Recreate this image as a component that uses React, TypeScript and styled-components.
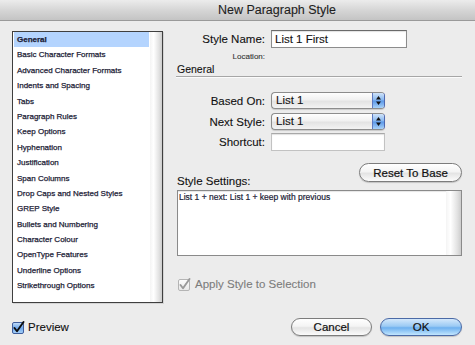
import styled, { createGlobalStyle } from 'styled-components';

const GlobalStyle = createGlobalStyle`
    html, body {
        margin: 0;
        padding: 0;
        background: #ececec;
    }
    * {
        box-sizing: border-box;
    }
`;

const categories = [
    'General',
    'Basic Character Formats',
    'Advanced Character Formats',
    'Indents and Spacing',
    'Tabs',
    'Paragraph Rules',
    'Keep Options',
    'Hyphenation',
    'Justification',
    'Span Columns',
    'Drop Caps and Nested Styles',
    'GREP Style',
    'Bullets and Numbering',
    'Character Colour',
    'OpenType Features',
    'Underline Options',
    'Strikethrough Options',
];

const Window = styled.div`
    width: 475px;
    height: 345px;
    overflow: hidden;
    background: #ececec;
    display: flex;
    flex-direction: column;
    font-family: "Liberation Sans", Arial, sans-serif;
    color: #111;
    -webkit-text-stroke: 0.1px currentColor;
`;

const TitleBar = styled.div`
    height: 21px;
    flex: none;
    border-bottom: 1px solid #9a9a9a;
    background: linear-gradient(#ececec, #d6d6d6 50%, #c4c4c4);
    font-size: 12.5px;
    line-height: 20px;
    text-align: center;
    padding-left: 79px;
    color: #1e1e1e;
`;

const Main = styled.div`
    display: grid;
    grid-template-columns: 151px 285px;
    column-gap: 14px;
    padding: 9px 0 0 12px;
`;

const CategoryList = styled.div`
    margin-top: 1px;
    height: 272px;
    border: 1px solid #3f3f3f;
    background: #fff;
    display: grid;
    grid-template-columns: 1fr 12px;
    box-shadow: 1px 1px 0 #d4d4d4;
`;

const Items = styled.ul`
    list-style: none;
    margin: 0;
    padding: 0 1px;
`;

const Item = styled.li<{ $selected?: boolean }>`
    height: 15.4px;
    line-height: 15.4px;
    padding-left: 3px;
    font-size: 8px;
    white-space: nowrap;
    color: #1c1c36;
    -webkit-text-stroke: 0.25px #1c1c36;
    font-weight: ${p => (p.$selected ? 700 : 400)};
    background: ${p => (p.$selected ? '#b4d4fe' : 'transparent')};
`;

const ScrollStrip = styled.div`
    background: linear-gradient(to right, #f4f4f4, #ffffff 30%, #e2e2e2 75%, #cdcdcd);
`;

const Pane = styled.div`
    display: flex;
    flex-direction: column;
`;

const Row = styled.div<{ $mt?: number }>`
    display: flex;
    align-items: center;
    margin-top: ${p => p.$mt ?? 0}px;
`;

const Label = styled.span<{ $small?: boolean }>`
    width: 88px;
    margin-right: 6px;
    text-align: right;
    font-size: ${p => (p.$small ? '8px' : '11.5px')};
    line-height: ${p => (p.$small ? '10px' : '14px')};
    color: ${p => (p.$small ? '#333' : '#111')};
    white-space: nowrap;
`;

const TextField = styled.div<{ $w: number; $h: number; $light?: boolean }>`
    width: ${p => p.$w}px;
    height: ${p => p.$h}px;
    border: 1px solid ${p => (p.$light ? '#c2c2c2' : '#8c8c8c')};
    border-top-color: ${p => (p.$light ? '#a8a8a8' : '#6a6a6a')};
    background: #fff;
    box-shadow: inset 0 1px 1px rgba(0, 0, 0, 0.12);
    font-size: 11.5px;
    line-height: 16px;
    padding-left: 3px;
    white-space: nowrap;
`;

const SectionHeading = styled.div`
    margin: 1px 0 0 -1px;
    padding-left: 1px;
    font-size: 10.5px;
    line-height: 12px;
    padding-bottom: 1px;
    border-bottom: 1px solid #a6a6a6;
    box-shadow: 0 1px 0 #fbfbfb;
`;

const Select = styled.div`
    width: 114px;
    height: 17px;
    border: 1px solid #8c8c8c;
    border-right-color: #4f68b0;
    border-radius: 4px;
    overflow: hidden;
    display: flex;
    background: linear-gradient(#fefefe, #f1f1f1 45%, #e3e3e3 55%, #f3f3f3);
    box-shadow: 0 1px 1px rgba(0, 0, 0, 0.15);
`;

const SelectValue = styled.span`
    flex: 1;
    font-size: 11.5px;
    line-height: 15px;
    padding-left: 4px;
`;

const Stepper = styled.span`
    width: 12px;
    border-left: 1px solid #5d79c0;
    background: linear-gradient(#cfe3fa, #85b6ef 48%, #5a97e8 52%, #a8d2f8);
    display: flex;
    align-items: center;
    justify-content: center;
`;

const SettingsHeader = styled.div`
    margin-top: 12px;
    display: flex;
    justify-content: space-between;
    align-items: flex-end;
`;

const SettingsLabel = styled.span`
    font-size: 11.5px;
    line-height: 13px;
`;

const PushButton = styled.button<{ $w: number; $h?: number; $default?: boolean }>`
    width: ${p => p.$w}px;
    height: ${p => p.$h ?? 18}px;
    padding: 0;
    border-radius: 10px;
    border: 1px solid ${p => (p.$default ? '#4b6aa6' : '#7c7c7c')};
    background: ${p =>
        p.$default
            ? 'linear-gradient(#d4e8fb, #9bcaf4 45%, #6eb0ef 55%, #c2e6fe)'
            : 'linear-gradient(#ffffff, #f4f4f4 45%, #e4e4e4 55%, #fbfbfb)'};
    box-shadow: 0 1px 1px rgba(0, 0, 0, 0.18);
    font-family: "Liberation Sans", Arial, sans-serif;
    font-size: 11.5px;
    color: #111;
    -webkit-text-stroke: 0.2px #111;
`;

const ResetButton = styled(PushButton)`
    margin-bottom: 6px;
`;

const SettingsBox = styled.div`
    margin-top: 2px;
    height: 66px;
    border: 1px solid #8a8a8a;
    background: #fff;
    display: grid;
    grid-template-columns: 1fr 15px;
    box-shadow: inset 0 1px 1px rgba(0, 0, 0, 0.1);
`;

const SettingsText = styled.div`
    font-size: 8.5px;
    line-height: 11px;
    padding: 1px 1px;
    color: #1c1c36;
    -webkit-text-stroke: 0.2px #1c1c36;
`;

const CheckRow = styled.div<{ $mt?: number; $disabled?: boolean }>`
    display: flex;
    align-items: center;
    gap: ${p => (p.$disabled ? 4 : 3)}px;
    margin-top: ${p => p.$mt ?? 0}px;
    margin-left: ${p => (p.$disabled ? 1 : 0)}px;
    font-size: 11.5px;
    line-height: 14px;
    color: ${p => (p.$disabled ? '#7c7c7c' : '#111')};
`;

const Footer = styled.div`
    margin-top: 15px;
    height: 18px;
    padding: 0 13px 0 12px;
    display: flex;
    align-items: center;
    justify-content: space-between;
`;

const ButtonGroup = styled.div`
    display: flex;
    gap: 8px;
`;

function StepperArrows() {
    return (
        <svg width="7" height="11" viewBox="0 0 7 11">
            <path d="M3.5 1 L6 4.5 L1 4.5 Z" fill="#111" />
            <path d="M3.5 10 L6 6.5 L1 6.5 Z" fill="#111" />
        </svg>
    );
}

function CheckBox({ disabled }: { disabled?: boolean }) {
    const id = disabled ? 'cbg' : 'cbb';
    return (
        <svg width="13" height="13" viewBox="0 0 13 13">
            <defs>
                <linearGradient id={id} x1="0" y1="0" x2="0" y2="1">
                    {disabled ? (
                        <>
                            <stop offset="0" stopColor="#fdfdfd" />
                            <stop offset="1" stopColor="#e8e8e8" />
                        </>
                    ) : (
                        <>
                            <stop offset="0" stopColor="#c7e0fa" />
                            <stop offset="0.5" stopColor="#6ea7ec" />
                            <stop offset="1" stopColor="#a9d3f9" />
                        </>
                    )}
                </linearGradient>
            </defs>
            <rect x="0.5" y="1.5" width="11" height="11" rx="1.5" fill={`url(#${id})`} stroke={disabled ? '#b4b4b4' : '#3f5d9c'} />
            <path
                d="M2.5 7 L5 10.3 L11.5 1"
                fill="none"
                stroke={disabled ? '#9a9a9a' : '#0d0d0d'}
                strokeWidth="1.9"
                strokeLinecap="round"
                strokeLinejoin="round"
            />
        </svg>
    );
}

export default function App() {
    return (
        <Window>
            <GlobalStyle />
            <TitleBar>New Paragraph Style</TitleBar>
            <Main>
                <CategoryList>
                    <Items>
                        {categories.map((name, index) => (
                            <Item key={name} $selected={index === 0}>
                                {name}
                            </Item>
                        ))}
                    </Items>
                    <ScrollStrip />
                </CategoryList>

                <Pane>
                    <Row>
                        <Label>Style Name:</Label>
                        <TextField $w={136} $h={18}>List 1 First</TextField>
                    </Row>
                    <Row $mt={4}>
                        <Label $small>Location:</Label>
                    </Row>
                    <SectionHeading>General</SectionHeading>
                    <Row $mt={15}>
                        <Label>Based On:</Label>
                        <Select>
                            <SelectValue>List 1</SelectValue>
                            <Stepper><StepperArrows /></Stepper>
                        </Select>
                    </Row>
                    <Row $mt={4}>
                        <Label>Next Style:</Label>
                        <Select>
                            <SelectValue>List 1</SelectValue>
                            <Stepper><StepperArrows /></Stepper>
                        </Select>
                    </Row>
                    <Row $mt={3}>
                        <Label>Shortcut:</Label>
                        <TextField $w={114} $h={18} $light />
                    </Row>
                    <SettingsHeader>
                        <SettingsLabel>Style Settings:</SettingsLabel>
                        <ResetButton $w={103} $h={19}>Reset To Base</ResetButton>
                    </SettingsHeader>
                    <SettingsBox>
                        <SettingsText>List 1 + next: List 1 + keep with previous</SettingsText>
                        <ScrollStrip />
                    </SettingsBox>
                    <CheckRow $mt={21} $disabled>
                        <CheckBox disabled />
                        Apply Style to Selection
                    </CheckRow>
                </Pane>
            </Main>

            <Footer>
                <CheckRow>
                    <CheckBox />
                    Preview
                </CheckRow>
                <ButtonGroup>
                    <PushButton $w={81}>Cancel</PushButton>
                    <PushButton $w={82} $default>OK</PushButton>
                </ButtonGroup>
            </Footer>
        </Window>
    );
}
